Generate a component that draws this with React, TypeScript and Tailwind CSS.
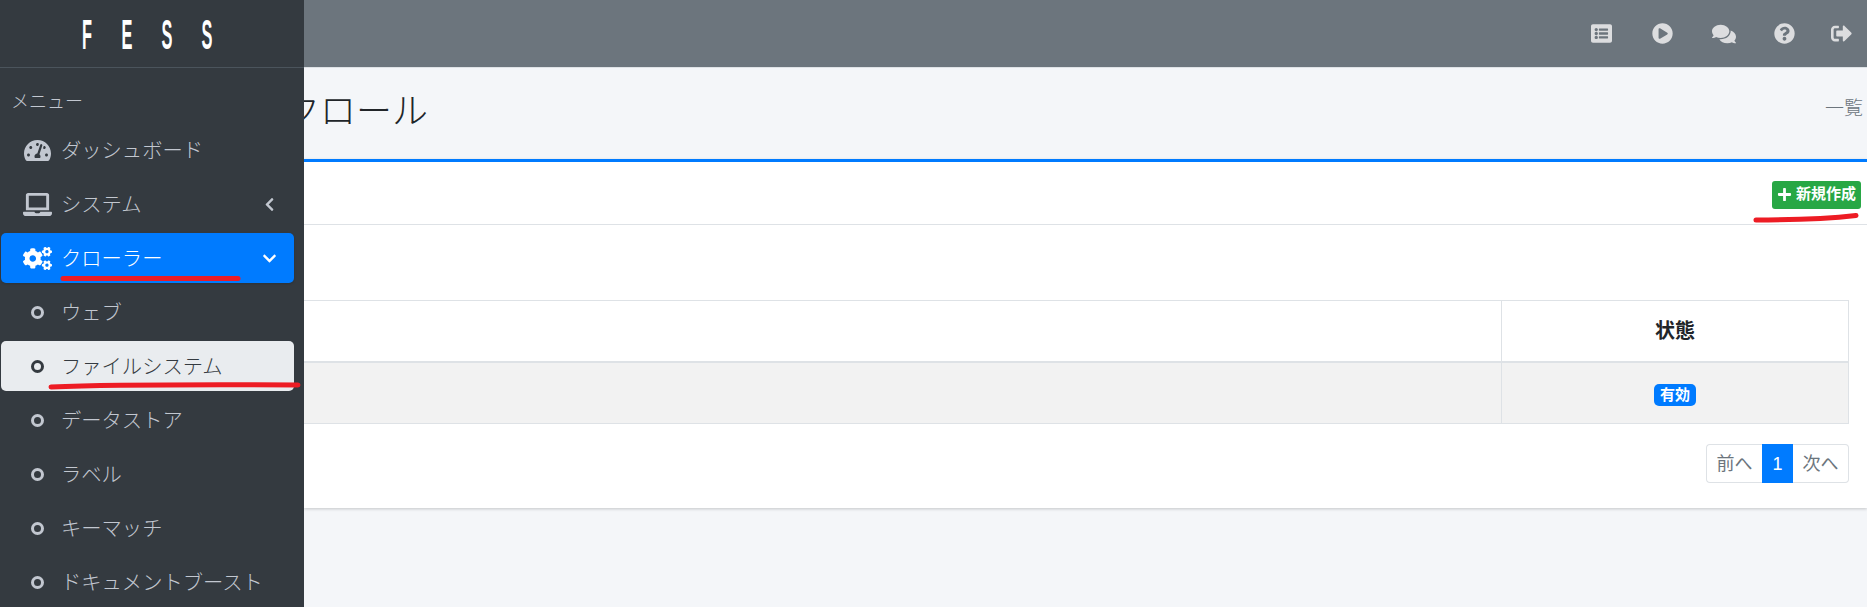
import type { ReactNode } from "react";
import {
  FaChevronDown,
  FaChevronLeft,
  FaCogs,
  FaComments,
  FaLaptop,
  FaListAlt,
  FaPlayCircle,
  FaPlus,
  FaQuestionCircle,
  FaSignOutAlt,
  FaTachometerAlt,
} from "react-icons/fa";

const subItems = [
  { label: "ウェブ" },
  { label: "ファイルシステム", active: true },
  { label: "データストア" },
  { label: "ラベル" },
  { label: "キーマッチ" },
  { label: "ドキュメントブースト" },
];

export default function App() {
  return (
    <div className="relative flex h-[607px] w-full overflow-hidden bg-[#f4f6f9] font-['Liberation_Sans','Noto_Sans_CJK_JP',sans-serif] text-[20px] font-light text-[#212529]">
      <Sidebar />
      <div className="flex min-w-0 flex-1 flex-col overflow-hidden">
        <TopBar />
        <div className="flex h-[91px] items-center justify-between pr-[4px] pb-[4px]">
          <h1 className="-ml-[20px] text-[36px] font-light leading-none">クロール</h1>
          <span className="mb-[4px] text-[19px] text-[#6c757d]">一覧</span>
        </div>
        <Card />
      </div>
      <Annotations />
    </div>
  );
}

function Sidebar() {
  return (
    <aside className="flex w-[304px] shrink-0 flex-col bg-[#343a40] text-[#c2c7d0]">
      <div className="flex h-[68px] shrink-0 items-center justify-center border-b border-[#4b545c] pt-[3px] pr-[10px]">
        {"FESS".split("").map((ch, i) => (
          <span
            key={i}
            className="inline-block w-[40px] scale-x-[0.39] text-center font-['Liberation_Sans'] text-[42px] leading-none font-bold text-white"
          >
            {ch}
          </span>
        ))}
      </div>
      <div className="flex h-[57px] shrink-0 items-center pl-[11px] pt-[12px] text-[18px]">メニュー</div>
      <nav className="flex w-[293px] flex-col gap-[4px] pl-[1px]">
        <NavItem icon={<FaTachometerAlt className="text-[27px]" />} label="ダッシュボード" />
        <NavItem
          icon={<FaLaptop className="text-[29px]" />}
          label="システム"
          trailing={<FaChevronLeft className="text-[15px]" />}
        />
        <NavItem
          icon={<FaCogs className="text-[29px]" />}
          label="クローラー"
          trailing={<FaChevronDown className="text-[15px]" />}
          className="bg-[#007bff] text-white shadow-sm"
        />
        {subItems.map((item) => (
          <NavItem
            key={item.label}
            icon={<span className="block size-[13px] rounded-full border-[3px] border-current" />}
            label={item.label}
            className={item.active ? "bg-[#e9ecef] text-[#343a40]" : ""}
          />
        ))}
      </nav>
    </aside>
  );
}

function NavItem({
  icon,
  label,
  trailing,
  className = "",
}: {
  icon: ReactNode;
  label: string;
  trailing?: ReactNode;
  className?: string;
}) {
  return (
    <div className={`flex h-[50px] w-[293px] shrink-0 items-center rounded-[5px] pl-[21px] pr-[17px] ${className}`}>
      <span className="flex w-[30px] justify-center">{icon}</span>
      <span className="ml-[9px] flex-1 whitespace-nowrap pt-[2px] text-[20.3px]">{label}</span>
      {trailing}
    </div>
  );
}

function TopBar() {
  return (
    <header className="flex h-[68px] shrink-0 items-center justify-end border-b border-[#dee2e6] bg-[#6c757d] text-[21px] text-[#dcdddf]">
      <span className="flex w-[61px] justify-center"><FaListAlt /></span>
      <span className="flex w-[61px] justify-center"><FaPlayCircle /></span>
      <span className="flex w-[61px] justify-center"><FaComments className="text-[24px]" /></span>
      <span className="flex w-[61px] justify-center"><FaQuestionCircle /></span>
      <span className="flex w-[52px] justify-center"><FaSignOutAlt /></span>
    </header>
  );
}

function Card() {
  return (
    <section className="h-[349px] shrink-0 border-t-[3px] border-[#007bff] bg-white shadow-[0_1px_3px_rgba(0,0,0,0.2)]">
      <div className="flex h-[63px] items-center justify-end border-b border-[#dee2e6] pt-[3px] pr-[6px]">
        <button
          type="button"
          className="flex h-[28px] w-[89px] items-center justify-center gap-[4px] rounded-[3px] bg-[#28a745] text-[15px] font-bold text-white"
        >
          <FaPlus className="text-[15px]" />
          新規作成
        </button>
      </div>
      <div className="pr-[18px] pt-[75px]">
        <table className="w-full border-collapse">
          <colgroup>
            <col />
            <col className="w-[347px]" />
          </colgroup>
          <thead>
            <tr className="h-[61px]">
              <th className="border-y-1 border-b-2 border-[#dee2e6]" />
              <th className="border-1 border-b-2 border-[#dee2e6] pt-[1px] text-center font-bold">状態</th>
            </tr>
          </thead>
          <tbody>
            <tr className="h-[62px] bg-[#f2f2f2]">
              <td className="border-y-1 border-[#dee2e6]" />
              <td className="border-1 border-[#dee2e6] text-center">
                <span className="inline-block rounded-[5px] bg-[#007bff] px-[6px] py-[2px] text-[15px] leading-[18px] font-bold text-white">
                  有効
                </span>
              </td>
            </tr>
          </tbody>
        </table>
        <div className="mt-[20px] flex justify-end text-[18px] font-normal text-[#6c757d]">
          <span className="flex h-[39px] w-[56px] items-center justify-center rounded-l-[4px] border border-r-0 border-[#dee2e6] pt-[2px]">前へ</span>
          <span className="flex h-[39px] w-[31px] items-center justify-center bg-[#007bff] pt-[2px] text-white">1</span>
          <span className="flex h-[39px] w-[56px] items-center justify-center rounded-r-[4px] border border-l-0 border-[#dee2e6] pt-[2px]">次へ</span>
        </div>
      </div>
    </section>
  );
}

// hand-drawn red marker strokes on top of the screenshot
function Annotations() {
  return (
    <svg className="pointer-events-none absolute top-0 left-0" width="1867" height="607" fill="none" stroke="#ed1c24" strokeWidth="5" strokeLinecap="round">
      <path d="M63 278.5 H238" />
      <path d="M51 387 C 100 385, 200 384.5, 298 385" />
      <path d="M1756 220 C 1790 220, 1825 219, 1856 215.5" />
    </svg>
  );
}
